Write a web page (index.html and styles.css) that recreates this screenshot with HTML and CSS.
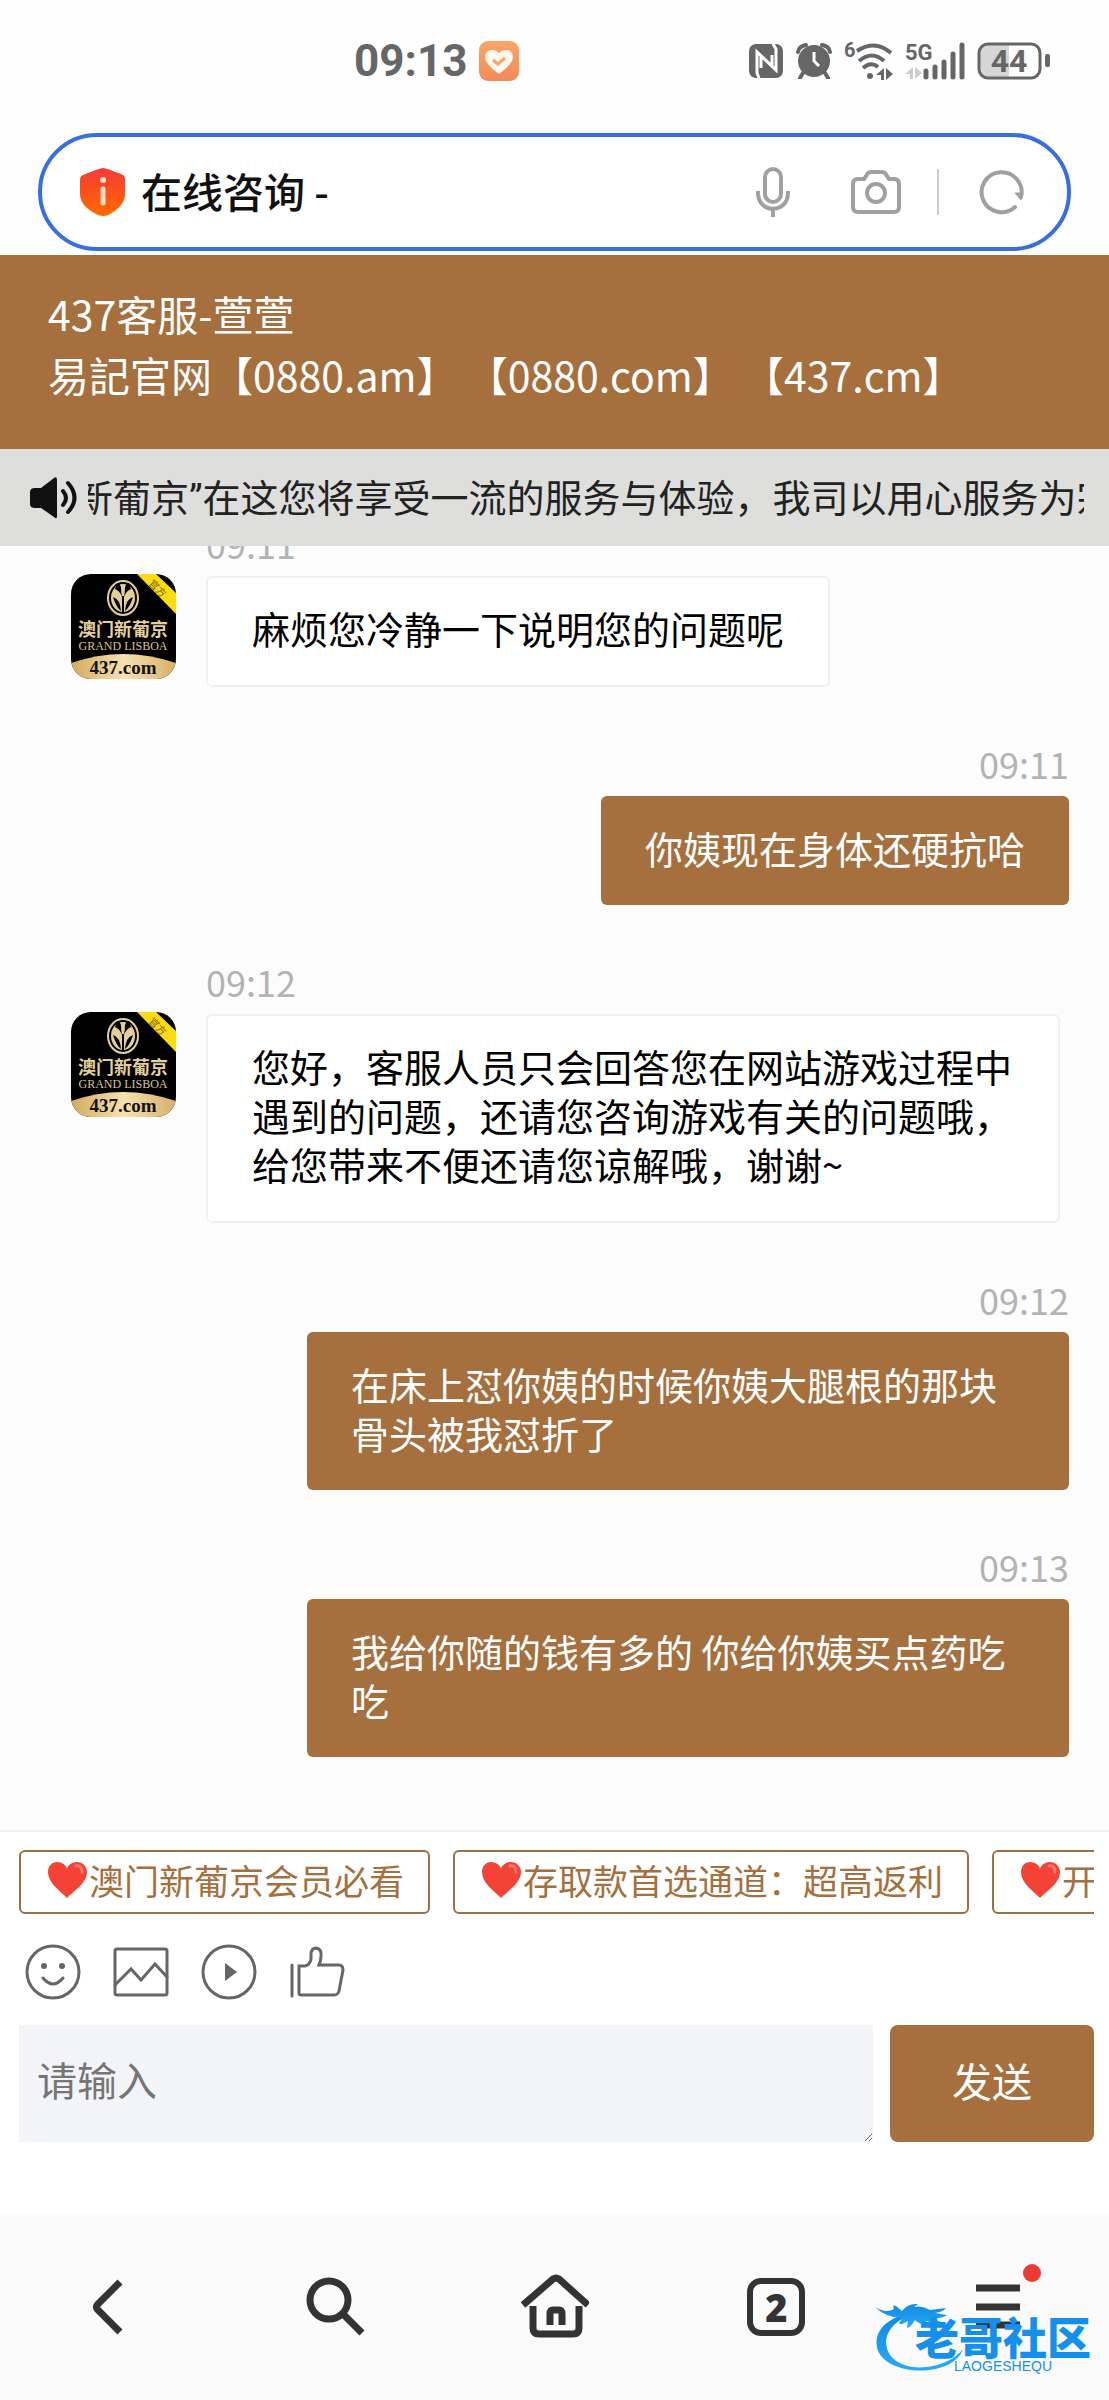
FILE: index.html
```
<!DOCTYPE html>
<html lang="zh-CN">
<head>
    <meta charset="UTF-8">
    <meta name="viewport" content="width=device-width, initial-scale=1.0">
    <title>在线咨询 -</title>
    <link rel="stylesheet" href="styles.css">
</head>
<body>
    <!-- shared gradients and shapes -->
    <svg class="defs" aria-hidden="true">
        <defs>
            <linearGradient id="gold" x1="0" y1="0" x2="1" y2="0">
                <stop offset="0" stop-color="#d3a95f"/>
                <stop offset="0.5" stop-color="#f6e2ae"/>
                <stop offset="1" stop-color="#d8b068"/>
            </linearGradient>
            <linearGradient id="shield" x1="0" y1="0" x2="0" y2="1">
                <stop offset="0" stop-color="#f53b36"/>
                <stop offset="1" stop-color="#ff6a00"/>
            </linearGradient>
            <linearGradient id="orange" x1="0" y1="0" x2="0" y2="1">
                <stop offset="0" stop-color="#f9a668"/>
                <stop offset="1" stop-color="#f28a5a"/>
            </linearGradient>
            <linearGradient id="blue" x1="0" y1="0" x2="0" y2="1">
                <stop offset="0" stop-color="#0d8ae6"/>
                <stop offset="1" stop-color="#2aaaf5"/>
            </linearGradient>
        </defs>
        <symbol id="emblem" viewBox="0 0 105 105">
            <path d="M0 89Q52 71 105 89V105H0Z" fill="url(#gold)"/>
            <path d="M66 0H85L105 19V40Z" fill="#fbdc14"/>
            <ellipse cx="52" cy="24" rx="15" ry="17" fill="none" stroke="#e3cf9c" stroke-width="2"/>
            <ellipse cx="52" cy="24" rx="12" ry="14" fill="#e3cf9c"/>
            <path d="M46 9H48L50 13Q50 18 51 23Q49 17 44 15ZM58 9H56L54 13Q54 18 53 23Q55 17 60 15ZM42 23Q49 25 50 37Q45 33 42 23ZM62 23Q55 25 54 37Q59 33 62 23ZM51 22H53V39H51Z" fill="#000"/>
        </symbol>
        <symbol id="heart" viewBox="0 0 44 38">
            <path d="M22 37C15 30 3 22 3 11C3 4 8 1 12 1C17 1 21 4 22 8C23 4 27 1 32 1C37 1 42 5 42 11C42 22 29 30 22 37Z" fill="#f44336"/>
            <path d="M31 5Q37 4 37 11" fill="none" stroke="#ff7a70" stroke-width="3" stroke-linecap="round"/>
        </symbol>
    </svg>

    <div class="status-bar">
        <div class="status-left">
            <span class="clock">09:13</span>
            <svg width="40" height="40" viewBox="0 0 40 40">
                <rect width="40" height="40" rx="9" fill="url(#orange)"/>
                <path d="M20 33Q6 23 6 16C6 8 16 7 20 12C24 7 34 8 34 16Q34 23 20 33Z" fill="#fff6ec"/>
                <path d="M14 19L19 23L26 17" fill="none" stroke="#f5a56b" stroke-width="3"/>
            </svg>
        </div>
        <div class="status-right">
            <!-- nfc -->
            <svg width="35" height="36" viewBox="0 0 35 36">
                <rect x="0" y="1" width="34" height="34" rx="7" fill="#666"/>
                <path d="M10 35L8 30V9L23 23V12M24 1L27 6V27L12 13V25" fill="none" stroke="#fff" stroke-width="3"/>
            </svg>
            <!-- alarm -->
            <svg width="36" height="36" viewBox="0 0 36 36">
                <circle cx="18" cy="18" r="16" fill="#666"/>
                <path d="M2 9Q3 3 10 2M34 9Q33 3 26 2M7 30L4 35M29 30L32 35" fill="none" stroke="#666" stroke-width="4" stroke-linecap="round"/>
                <path d="M18 9V18L23 23" fill="none" stroke="#fff" stroke-width="3"/>
            </svg>
            <!-- wifi -->
            <svg width="49" height="40" viewBox="0 0 49 40">
                <text x="0" y="16" class="status-text" font-size="20">6</text>
                <path d="M13 10Q31 -2 47 12M15 20Q28 9 40 20M19 27Q27 20 34 26" fill="none" stroke="#666" stroke-width="4"/>
                <circle cx="26" cy="35" r="3" fill="#666"/>
                <path d="M40 39H37V34H32L40 27ZM42 27L49 33L42 39Z" fill="#666"/>
            </svg>
            <!-- signal -->
            <svg width="60" height="38" viewBox="0 0 60 38">
                <text x="0" y="18" class="status-text" font-size="22">5G</text>
                <path d="M8 37H5V32H0L8 25ZM10 25L17 31L10 37Z" fill="#ccc"/>
                <path d="M21 29V35M30 25V35M39 20V35M48 12V35M57 3V35" stroke="#666" stroke-width="5" stroke-linecap="round"/>
            </svg>
            <!-- battery -->
            <svg width="74" height="38" viewBox="0 0 74 38">
                <path d="M12 2H32V36H12Q2 36 2 26V12Q2 2 12 2Z" fill="#d6d6d6"/>
                <rect x="2" y="2" width="61" height="34" rx="9" fill="none" stroke="#666" stroke-width="3"/>
                <rect x="68" y="12" width="5" height="13" rx="2" fill="#666"/>
                <text x="32" y="30" text-anchor="middle" class="status-text" font-size="32">44</text>
            </svg>
        </div>
    </div>

    <div class="address-bar">
        <svg width="46" height="48" viewBox="0 0 46 48">
            <path d="M23 0Q26 0 43 7Q45 8 45 12V27Q44 39 28 47Q23 49 18 47Q1 39 0 27V12Q0 8 3 7Q20 0 23 0Z" fill="url(#shield)"/>
            <circle cx="23" cy="12" r="3" fill="#ffd9c4"/>
            <path d="M23 21V35" stroke="#ffd9c4" stroke-width="5" stroke-linecap="round"/>
        </svg>
        <input class="address" type="text" value="在线咨询 -" aria-label="网址">
        <button class="icon-btn" aria-label="语音">
            <svg width="34" height="50" viewBox="0 0 34 50">
                <rect x="9" y="2" width="16" height="33" rx="8"/>
                <path d="M2 24V26C2 47 32 47 32 26V24M17 42V50"/>
            </svg>
        </button>
        <button class="icon-btn camera" aria-label="拍照">
            <svg width="50" height="44" viewBox="0 0 50 44">
                <path d="M7 9H13L17 3Q18 2 20 2H31Q33 2 34 3L38 9H43Q48 9 48 14V37Q48 42 43 42H7Q2 42 2 37V14Q2 9 7 9Z"/>
                <circle cx="25" cy="23" r="9"/>
            </svg>
        </button>
        <span class="divider"></span>
        <button class="icon-btn" aria-label="刷新">
            <svg width="46" height="46" viewBox="0 0 46 46">
                <path d="M36 38A20 20 0 1 1 42 28" stroke-linecap="round"/>
                <path d="M36 24H44L42 31Z" fill="#a0a0a0" stroke-width="1"/>
            </svg>
        </button>
    </div>

    <header class="header">
        <div>437客服-萱萱</div>
        <div>易記官网【0880.am】 【0880.com】 【437.cm】</div>
    </header>

    <div class="notice">
        <svg width="48" height="42" viewBox="0 0 48 42">
            <path d="M5 11H11L24 1Q27 -1 27 3V39Q27 43 24 40L11 31H5Q0 31 0 27V15Q0 11 5 11Z" fill="#111"/>
            <path d="M33 14Q39 21 33 28M38 6Q51 21 38 35" fill="none" stroke="#111" stroke-width="4" stroke-linecap="round"/>
        </svg>
        <div class="notice-text">新葡京”在这您将享受一流的服务与体验，我司以用心服务为宗旨</div>
    </div>

    <main class="chat">
        <div class="message agent">
            <svg class="avatar" viewBox="0 0 105 105">
                <use href="#emblem"/>
                <text transform="translate(84 17) rotate(45)" text-anchor="middle" class="logo-tag">官方</text>
                <text x="52" y="62" text-anchor="middle" class="logo-cn">澳门新葡京</text>
                <text x="52" y="76" text-anchor="middle" class="logo-en">GRAND LISBOA</text>
                <text x="52" y="100" text-anchor="middle" class="logo-site">437.com</text>
            </svg>
            <div class="body">
                <div class="time">09:11</div>
                <div class="bubble">麻烦您冷静一下说明您的问题呢</div>
            </div>
        </div>
        <div class="message user">
            <div class="body">
                <div class="time">09:11</div>
                <div class="bubble">你姨现在身体还硬抗哈</div>
            </div>
        </div>
        <div class="message agent">
            <svg class="avatar" viewBox="0 0 105 105">
                <use href="#emblem"/>
                <text transform="translate(84 17) rotate(45)" text-anchor="middle" class="logo-tag">官方</text>
                <text x="52" y="62" text-anchor="middle" class="logo-cn">澳门新葡京</text>
                <text x="52" y="76" text-anchor="middle" class="logo-en">GRAND LISBOA</text>
                <text x="52" y="100" text-anchor="middle" class="logo-site">437.com</text>
            </svg>
            <div class="body">
                <div class="time">09:12</div>
                <div class="bubble">您好，客服人员只会回答您在网站游戏过程中遇到的问题，还请您咨询游戏有关的问题哦，给您带来不便还请您谅解哦，谢谢~</div>
            </div>
        </div>
        <div class="message user">
            <div class="body">
                <div class="time">09:12</div>
                <div class="bubble">在床上怼你姨的时候你姨大腿根的那块骨头被我怼折了</div>
            </div>
        </div>
        <div class="message user">
            <div class="body">
                <div class="time">09:13</div>
                <div class="bubble">我给你随的钱有多的 你给你姨买点药吃吃</div>
            </div>
        </div>
    </main>

    <section class="composer">
        <div class="chips">
            <button class="chip"><svg class="heart"><use href="#heart"/></svg>澳门新葡京会员必看</button>
            <button class="chip"><svg class="heart"><use href="#heart"/></svg>存取款首选通道：超高返利</button>
            <button class="chip"><svg class="heart"><use href="#heart"/></svg>开户</button>
        </div>
        <div class="tools">
            <button class="tool" aria-label="表情">
                <svg viewBox="0 0 56 56">
                    <circle cx="28" cy="28" r="26"/>
                    <path d="M18 34Q28 46 38 34"/>
                    <circle cx="19" cy="22" r="3" class="solid"/>
                    <circle cx="37" cy="22" r="3" class="solid"/>
                </svg>
            </button>
            <button class="tool" aria-label="图片">
                <svg viewBox="0 0 56 56">
                    <rect x="2" y="5" width="52" height="46" rx="2"/>
                    <path d="M2 41L18 25L28 36L42 20L54 33"/>
                </svg>
            </button>
            <button class="tool" aria-label="视频">
                <svg viewBox="0 0 56 56">
                    <circle cx="28" cy="28" r="26"/>
                    <path d="M24 19L36 28L24 37Z" class="solid"/>
                </svg>
            </button>
            <button class="tool" aria-label="评价">
                <svg viewBox="0 0 56 56">
                    <path d="M3 21V52M10 22H16Q21 21 22 15V9Q23 4 27 4Q33 5 32 12Q32 17 30 21H50Q54 21 54 26L50 47Q49 51 45 51H12Q10 51 10 49Z"/>
                </svg>
            </button>
        </div>
        <div class="input-row">
            <textarea class="input" placeholder="请输入" aria-label="请输入"></textarea>
            <button class="send">发送</button>
        </div>
    </section>

    <nav class="nav">
        <button aria-label="后退">
            <svg width="66" height="66" viewBox="0 0 66 66">
                <path d="M42 8L20 30Q17 33 20 36L42 58"/>
            </svg>
        </button>
        <button aria-label="搜索">
            <svg width="66" height="66" viewBox="0 0 66 66">
                <circle cx="29" cy="26" r="19"/>
                <path d="M43 40L62 59"/>
            </svg>
        </button>
        <button aria-label="主页">
            <svg width="70" height="66" viewBox="0 0 70 66">
                <path d="M4 31L34 5Q37 3 40 5L69 31"/>
                <path d="M14 32V54Q14 60 20 60H54Q60 60 60 54V32M31 51V40Q31 36 34 36H40Q43 36 43 40V51"/>
            </svg>
        </button>
        <button aria-label="窗口"><span class="tabs">2</span></button>
        <button aria-label="菜单">
            <span class="menu">
                <svg width="44" height="46" viewBox="0 0 44 46">
                    <path d="M0 4H44M0 23H44M0 41H44"/>
                </svg>
                <span class="dot"></span>
            </span>
        </button>
        <div class="watermark">
            <svg width="92" height="72" viewBox="0 0 92 72">
                <path d="M38 12C12 16 0 31 3 46C8 75 78 79 89 48C75 67 32 75 16 54C5 37 19 19 38 14Z" fill="url(#blue)"/>
                <path d="M1 6Q12 13 20 8Q18 3 22 5L28 10Q34 2 44 3L40 6Q48 4 56 9L72 7Q69 11 61 12L73 14Q67 18 57 17L72 23Q62 25 53 20Q48 26 41 19Q37 26 33 27L34 20Q26 25 25 22L29 17Q12 17 1 6Z" fill="url(#blue)"/>
            </svg>
            <div class="watermark-text">
                <strong>老哥社区</strong>
                <small>LAOGESHEQU</small>
            </div>
        </div>
    </nav>
</body>
</html>
```
FILE: styles.css
```
* {
    box-sizing: border-box;
}
body {
    display: flex;
    flex-direction: column;
    height: 100vh;
    margin: 0;
    overflow: hidden;
    background-color: #fefefe;
    font-family: "Noto Sans CJK SC", sans-serif;
}
button, input, textarea {
    margin: 0;
    padding: 0;
    border: none;
    outline: none;
    background: none;
    font-family: inherit;
}
button {
    cursor: pointer;
}
svg {
    display: block;
    flex-shrink: 0;
}
.defs {
    position: absolute;
    width: 0;
    height: 0;
}

/* status bar */
.status-bar {
    display: flex;
    justify-content: space-between;
    align-items: center;
    height: 122px;
    padding: 0 58px 0 354px;
    color: #666;
}
.status-left, .status-right {
    display: flex;
    align-items: center;
    gap: 12px;
}
.clock {
    font-family: Roboto, sans-serif;
    font-size: 44px;
    font-weight: 700;
}
.status-text {
    font-family: Roboto, sans-serif;
    font-weight: 700;
    fill: #666;
}

/* address bar */
.address-bar {
    display: flex;
    align-items: center;
    height: 118px;
    margin: 11px 38px 4px;
    padding: 0 42px 0 38px;
    border: 4px solid #376fdf;
    border-radius: 59px;
    background-color: #fff;
}
.address {
    flex: 1;
    min-width: 0;
    margin-left: 15px;
    padding-bottom: 4px;
    font-size: 41px;
    font-weight: 500;
    color: #111;
}
.icon-btn svg {
    fill: none;
    stroke: #a0a0a0;
    stroke-width: 4;
}
.camera {
    margin: 0 36px 0 61px;
}
.divider {
    width: 2px;
    height: 46px;
    margin-right: 40px;
    background-color: #ccc;
}

/* header */
.header {
    padding: 28px 48px 44px;
    background-color: #a66f3e;
    color: #fff;
    font-size: 41px;
    line-height: 61px;
}
.notice {
    display: flex;
    align-items: center;
    gap: 10px;
    height: 97px;
    padding: 0 25px 0 30px;
    background-color: #dededc;
    color: #222;
}
.notice-text {
    flex: 1;
    padding-bottom: 4px;
    overflow: hidden;
    font-family: Roboto, "Noto Sans CJK SC", sans-serif;
    font-size: 38px;
    white-space: nowrap;
    text-indent: -13px; /* scrolled position */
}

/* chat */
.chat {
    display: flex;
    flex: 1;
    flex-direction: column;
    justify-content: flex-end;
    min-height: 0;
    padding-bottom: 18px;
    overflow: hidden;
    border-bottom: 2px solid #f0f0f0;
    background-color: #fcfcfc;
}
.message {
    display: flex;
    flex-shrink: 0;
    margin-bottom: 55px;
}
.agent {
    gap: 30px;
    padding: 0 49px 0 71px;
}
.user {
    justify-content: flex-end;
    padding: 0 40px 0 307px;
}
.avatar {
    width: 105px;
    height: 105px;
    margin-top: 52px;
    border-radius: 20px;
    background-color: #000;
}
.logo-tag {
    fill: #7a5a00;
    font-size: 10px;
}
.logo-cn {
    fill: #e3cf9c;
    font-size: 18px;
    font-weight: 700;
}
.logo-en {
    fill: #d9c48f;
    font-family: "Liberation Serif", serif;
    font-size: 12px;
}
.logo-site {
    fill: #111;
    font-family: "Liberation Serif", serif;
    font-size: 19px;
    font-weight: 700;
}
.time {
    margin-bottom: 12px;
    color: #b3b3b3;
    font-size: 36px;
    line-height: 42px;
}
.user .time {
    text-align: right;
}
.bubble {
    width: fit-content;
    padding: 27px 44px 33px;
    border-radius: 6px;
    font-size: 38px;
    line-height: 49px;
}
.agent .bubble {
    padding: 25px 44px 33px;
    border: 2px solid #f0f0f0;
    background-color: #fff;
    color: #000;
}
.user .bubble {
    margin-left: auto;
    background-color: #a66f3e;
    color: #fff;
}

/* composer */
.composer {
    padding: 18px 15px 72px 19px;
    background-color: #fff;
}
.chips {
    display: flex;
    gap: 23px;
    overflow: hidden;
}
.chip {
    display: flex;
    flex-shrink: 0;
    align-items: center;
    height: 64px;
    padding: 0 24px 4px;
    border: 2px solid #9a7048;
    border-radius: 6px;
    color: #a66f3e;
    font-size: 35px;
    line-height: 52px;
    white-space: nowrap;
}
.heart {
    width: 44px;
    height: 38px;
}
.tools {
    display: flex;
    gap: 32px;
    padding: 30px 6px 25px;
}
.tool svg {
    width: 56px;
    height: 56px;
    fill: none;
    stroke: #666;
    stroke-width: 3;
    stroke-linecap: round;
}
.tool .solid {
    fill: #666;
    stroke: none;
}
.input-row {
    display: flex;
    gap: 17px;
}
.input {
    flex: 1;
    height: 117px;
    padding: 24px 18px;
    background-color: #f3f4f8;
    font-size: 40px;
    line-height: 60px;
}
.input::placeholder {
    color: #757575;
}
.send {
    width: 204px;
    padding-bottom: 8px;
    border-radius: 8px;
    background-color: #a66f3e;
    color: #fff;
    font-size: 40px;
}

/* bottom nav */
.nav {
    position: relative;
    display: grid;
    grid-template-columns: repeat(5, 1fr);
    height: 186px;
    background-color: #fafafa;
}
.nav button {
    display: flex;
    justify-content: center;
    align-items: center;
}
.nav button svg {
    fill: none;
    stroke: #333;
    stroke-width: 7;
}
.tabs {
    width: 58px;
    height: 58px;
    border: 6px solid #333;
    border-radius: 14px;
    color: #333;
    font-family: "Open Sans", sans-serif;
    font-size: 38px;
    font-weight: 800;
    line-height: 46px;
}
.menu {
    position: relative;
}
.dot {
    position: absolute;
    top: -20px;
    right: -21px;
    width: 18px;
    height: 18px;
    border-radius: 50%;
    background-color: #ea3a33;
}
.watermark {
    position: absolute;
    right: 18px;
    bottom: 27px;
    display: flex;
    color: #1590ea;
    pointer-events: none;
}
.watermark-text {
    display: flex;
    flex-direction: column;
    align-items: center;
    margin: 12px 0 0 -51px;
}
.watermark strong {
    font-size: 44px;
    font-weight: 900;
    line-height: 46px;
}
.watermark small {
    font-family: "Liberation Sans", sans-serif;
    font-size: 14px;
    line-height: 14px;
}
```
